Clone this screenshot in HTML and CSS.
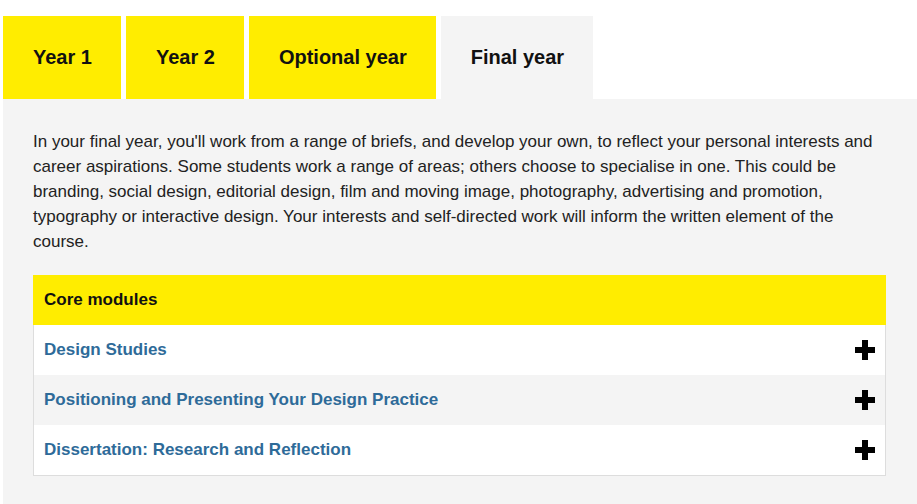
FILE: index.html
```html
<!DOCTYPE html>
<html>
<head>
    <title>Course structure</title>
    <link rel="stylesheet" href="styles.css">
</head>
<body>
    <div class="tabs">
        <!-- Year tabs -->
        <ul class="tab-list">
            <li class="tab">Year 1</li>
            <li class="tab">Year 2</li>
            <li class="tab">Optional year</li>
            <li class="tab active">Final year</li>
        </ul>

        <div class="tab-panel">
            <p class="intro">In your final year, you'll work from a range of briefs, and develop your own, to reflect your personal interests and career aspirations. Some students work a range of areas; others choose to specialise in one. This could be branding, social design, editorial design, film and moving image, photography, advertising and promotion, typography or interactive design. Your interests and self-directed work will inform the written element of the course.</p>

            <div class="modules">
                <div class="modules-head">Core modules</div>
                <div class="module-row">
                    <a href="#" class="module-link">Design Studies</a>
                    <svg class="plus" width="20" height="20" viewBox="0 0 20 20"><path d="M7 0h6v7h7v6h-7v7H7v-7H0V7h7z" fill="#000"/></svg>
                </div>
                <div class="module-row alt">
                    <a href="#" class="module-link">Positioning and Presenting Your Design Practice</a>
                    <svg class="plus" width="20" height="20" viewBox="0 0 20 20"><path d="M7 0h6v7h7v6h-7v7H7v-7H0V7h7z" fill="#000"/></svg>
                </div>
                <div class="module-row">
                    <a href="#" class="module-link">Dissertation: Research and Reflection</a>
                    <svg class="plus" width="20" height="20" viewBox="0 0 20 20"><path d="M7 0h6v7h7v6h-7v7H7v-7H0V7h7z" fill="#000"/></svg>
                </div>
            </div>
        </div>
    </div>
</body>
</html>
```

FILE: styles.css
```css
body {
    font-family: "Liberation Sans", Arial, sans-serif;
    background-color: #fff;
    margin: 0;
    padding: 16px 0 0 3px;
    color: #222;
}

.tab-list {
    display: flex;
    gap: 5px;
    list-style: none;
    margin: 0;
    padding: 0;
}

.tab {
    height: 83px;
    display: flex;
    align-items: center;
    padding: 0 29px 0 30px;
    background-color: #ffed00;
    color: #111;
    font-size: 20px;
    font-weight: bold;
}

.tab.active {
    background-color: #f4f4f4;
}

.tab-panel {
    background-color: #f4f4f4;
    padding: 30px 31px 40px 30px;
}

.intro {
    margin: 0 0 21px;
    font-size: 17px;
    line-height: 25px;
    color: #222;
}

.modules {
    border: 1px solid #ddd;
    border-top: none;
}

.modules-head {
    height: 50px;
    display: flex;
    align-items: center;
    padding: 0 11px;
    margin: 0 -1px;
    background-color: #ffed00;
    font-size: 17px;
    font-weight: bold;
    color: #111;
}

.module-row {
    height: 50px;
    display: flex;
    align-items: center;
    justify-content: space-between;
    padding: 0 10px 0 10px;
    background-color: #fff;
}

.module-row.alt {
    background-color: #f4f4f4;
}

.module-link {
    color: #2e6b99;
    font-size: 17px;
    font-weight: bold;
    text-decoration: none;
}

.plus {
    display: block;
}
```
